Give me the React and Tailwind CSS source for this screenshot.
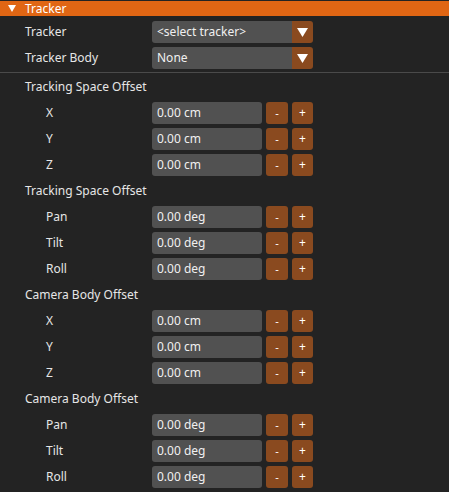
import React from "react";

const font = { fontFamily: '"Noto Sans", "Open Sans", sans-serif' };

function Arrow() {
  return (
    <svg width="11" height="9" viewBox="0 0 11 9">
      <polygon points="0,0 11,0 5.5,9" fill="#ffffff" />
    </svg>
  );
}

function Select({ value }) {
  return (
    <div className="flex h-[22px] w-[161px] overflow-hidden rounded-[3px]">
      <div className="flex flex-1 items-center bg-[#515151] pl-[5px] text-[12px] text-[#f0f0f0]">
        {value}
      </div>
      <div className="flex w-[21px] items-center justify-center bg-[#8a4a1f]">
        <Arrow />
      </div>
    </div>
  );
}

function Row({ label, children, indent }) {
  return (
    <div className="flex h-[22px] items-center">
      <div
        className={
          (indent ? "pl-[46px] w-[152px]" : "pl-[25px] w-[152px]") +
          " text-[12px] text-[#e6e6e6]"
        }
      >
        {label}
      </div>
      {children}
    </div>
  );
}

function NumRow({ label, value }) {
  return (
    <Row label={label} indent>
      <div className="flex h-[22px] w-[110px] items-center rounded-[3px] bg-[#515151] pl-[5px] text-[12px] text-[#f0f0f0]">
        {value}
      </div>
      <div className="ml-[4px] flex h-[22px] w-[22px] items-center justify-center rounded-[3px] bg-[#8a4a1f] text-[11px] text-white">
        -
      </div>
      <div className="ml-[4px] flex h-[22px] w-[21px] items-center justify-center rounded-[3px] bg-[#8a4a1f] text-[12px] text-white">
        +
      </div>
    </Row>
  );
}

function Heading({ label }) {
  return (
    <div className="flex h-[22px] items-center pl-[25px] text-[12px] text-[#e6e6e6]">
      {label}
    </div>
  );
}

export default function App() {
  const groups = [
    { title: "Tracking Space Offset", rows: ["X", "Y", "Z"], unit: "cm" },
    { title: "Tracking Space Offset", rows: ["Pan", "Tilt", "Roll"], unit: "deg" },
    { title: "Camera Body Offset", rows: ["X", "Y", "Z"], unit: "cm" },
    { title: "Camera Body Offset", rows: ["Pan", "Tilt", "Roll"], unit: "deg" },
  ];
  return (
    <div className="h-[492px] w-[449px] overflow-hidden bg-[#232323] pt-[1px]" style={font}>
      <div className="flex h-[15px] items-center bg-[#e06614] text-[12px] text-white">
        <div className="ml-[8px] mr-[9px] flex items-center">
          <svg width="8" height="7" viewBox="0 0 8 7">
            <polygon points="0,0 8,0 4,7" fill="#ffffff" />
          </svg>
        </div>
        <span>Tracker</span>
      </div>
      <div className="mt-[5px] flex flex-col gap-[4px]">
        <Row label="Tracker">
          <Select value="<select tracker>" />
        </Row>
        <Row label="Tracker Body">
          <Select value="None" />
        </Row>
      </div>
      <div className="mt-[3px] h-[1px] bg-[#4a4a4a]" />
      <div className="mt-[3px] flex flex-col gap-[4px]">
        {groups.map((g, gi) => (
          <React.Fragment key={gi}>
            <Heading label={g.title} />
            {g.rows.map((r) => (
              <NumRow key={r} label={r} value={`0.00 ${g.unit}`} />
            ))}
          </React.Fragment>
        ))}
      </div>
    </div>
  );
}
